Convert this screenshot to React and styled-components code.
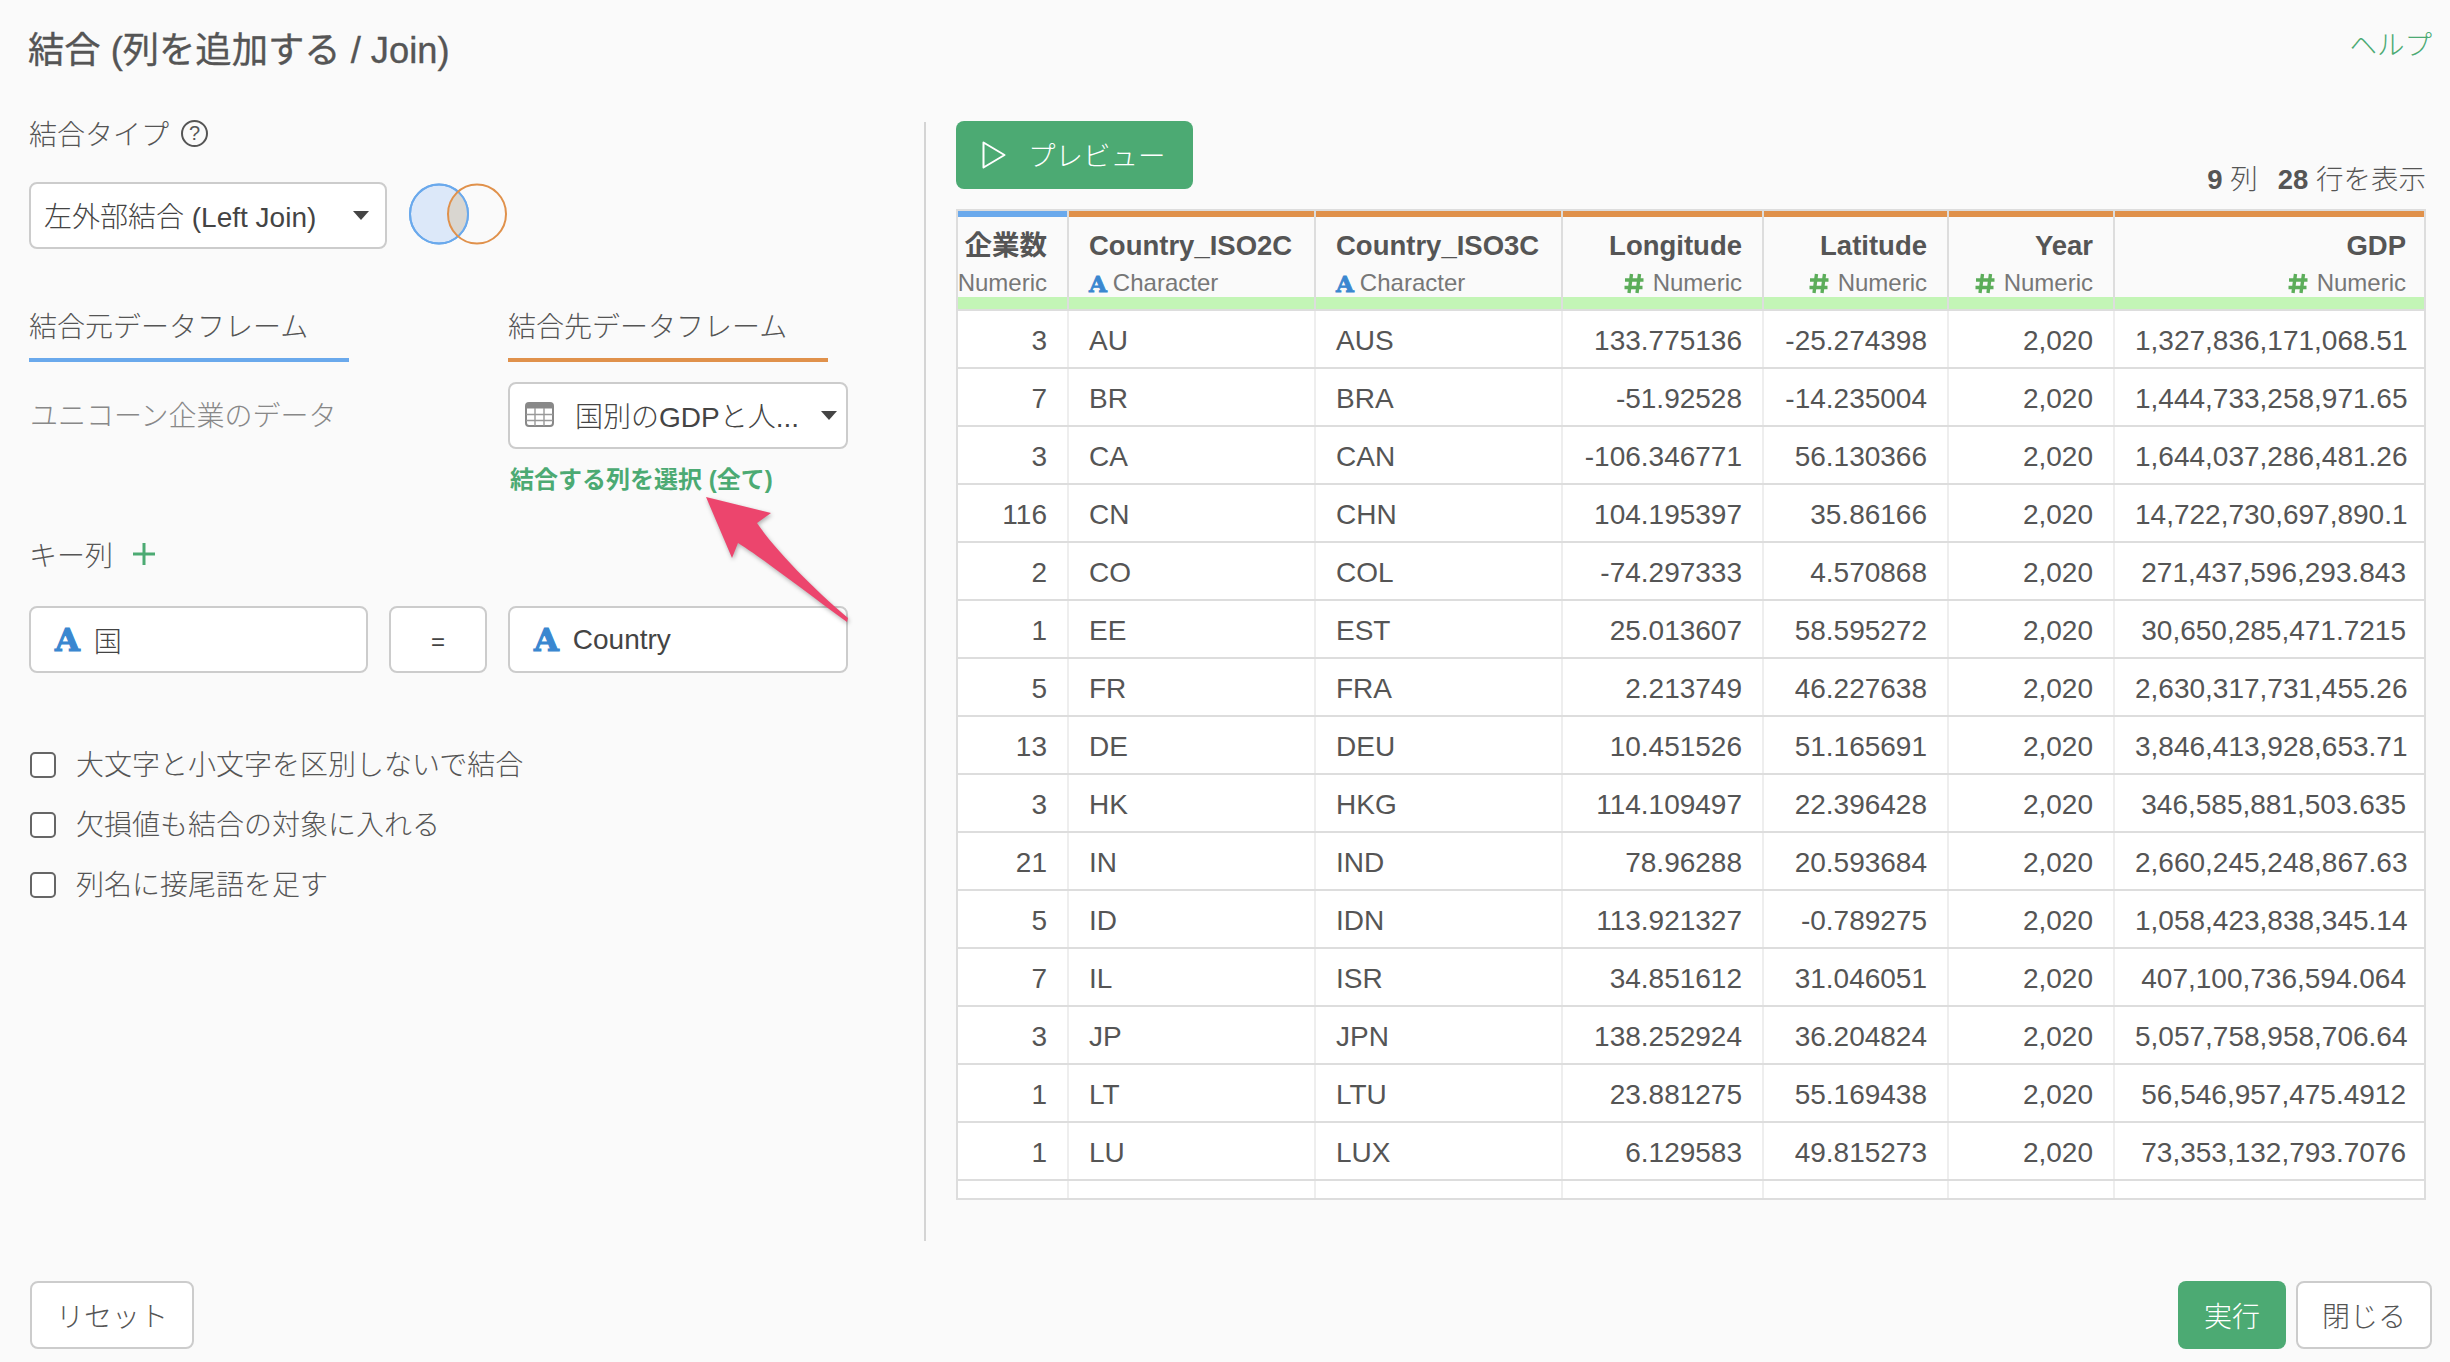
import React from 'react';
import styled, { createGlobalStyle } from 'styled-components';

const GlobalStyle = createGlobalStyle`
  html, body {
    margin: 0;
    padding: 0;
    background: #fafafa;
  }
  body {
    font-family: "Liberation Sans", "Noto Sans CJK JP", sans-serif;
    font-size: 28px;
    color: #555;
  }
  * {
    box-sizing: border-box;
  }
`;

const GREEN = '#4caa73';
const BLUE = '#6aa9ec';
const ORANGE = '#e0914b';

const Page = styled.div`
  position: relative;
  width: 2450px;
  height: 1362px;
  overflow: hidden;
  background: #fafafa;
`;

const Header = styled.header`
  display: flex;
  justify-content: space-between;
  align-items: flex-start;
  height: 122px;
  padding: 30px 18px 0 28px;
`;

const Title = styled.h1`
  margin: 0;
  font-size: 36.3px;
  font-weight: 400;
  line-height: 42px;
  color: #555;
  -webkit-text-stroke: 0.35px #555;
`;

const HelpLink = styled.a`
  margin-top: 1px;
  font-size: 27.5px;
  font-weight: 300;
  line-height: 30px;
  color: ${GREEN};
`;

const Body = styled.div`
  display: flex;
  height: 1119px;
`;

const LeftPane = styled.section`
  width: 926px;
  padding-left: 29px;
  border-right: 2px solid #d4d4d4;
`;

const Label = styled.div`
  display: flex;
  align-items: center;
  gap: ${(p) => p.$gap || 12}px;
  height: 22px;
  font-size: 28px;
  font-weight: 300;
  color: #555;
`;

const HelpMark = styled.span`
  display: flex;
  align-items: center;
  justify-content: center;
  width: 27px;
  height: 27px;
  border: 2px solid #555;
  border-radius: 50%;
  font-size: 20px;
  line-height: 1;
`;

const JoinRow = styled.div`
  display: flex;
  gap: 22px;
  margin-top: 38px;
`;

const Select = styled.div`
  display: flex;
  align-items: center;
  justify-content: space-between;
  width: ${(p) => p.$width}px;
  height: 67px;
  padding: 0 ${(p) => p.$right}px 0 ${(p) => p.$left}px;
  background: #fff;
  border: 2px solid #ccc;
  border-radius: 8px;
  font-size: 28px;
  font-weight: 300;
  color: #444;
`;

const SelectText = styled.span`
  display: flex;
  align-items: center;
  gap: 21px;
  margin-top: -2px;
  white-space: nowrap;
`;

const Caret = styled.span`
  width: 0;
  height: 0;
  border-left: 8px solid transparent;
  border-right: 8px solid transparent;
  border-top: 9px solid #444;
`;

const Venn = styled.svg`
  display: block;
  width: 98px;
  height: 62px;
  margin-top: 1px;
`;

const FrameGrid = styled.div`
  display: grid;
  grid-template-columns: 479px 340px;
  margin-top: 62px;
`;

const Tab = styled.div`
  width: 320px;
  height: 51px;
  padding-top: 3px;
  line-height: 28px;
  font-size: 28px;
  font-weight: 300;
  color: #555;
  border-bottom: 4px solid ${(p) => p.$color};
`;

const SourceName = styled.div`
  display: flex;
  align-items: center;
  height: 63px;
  margin-top: 20px;
  padding-left: 1px;
  font-size: 28px;
  font-weight: 300;
  color: #888;
`;

const TargetCol = styled.div`
  margin-top: 20px;
`;

const PickColumns = styled.a`
  display: block;
  margin-top: 16px;
  padding-left: 2px;
  line-height: 30px;
  font-size: 24px;
  font-weight: 700;
  color: ${GREEN};
  white-space: nowrap;
`;

const KeyLabel = styled(Label)`
  height: 30px;
  margin-top: 44px;
`;

const Plus = styled.svg`
  display: block;
  width: 22px;
  height: 22px;
`;

const KeyRow = styled.div`
  display: grid;
  grid-template-columns: 339px 98px 340px;
  gap: 21px;
  margin-top: 37px;
`;

const KeyBox = styled.div`
  display: flex;
  align-items: center;
  gap: 14px;
  height: 67px;
  padding-left: 24px;
  background: #fff;
  border: 2px solid #ccc;
  border-radius: 8px;
  font-size: 28px;
  font-weight: 300;
  color: #444;
`;

const EqualBox = styled(KeyBox)`
  justify-content: center;
  padding: 5px 0 0;
  font-size: 24px;
`;

const CharMark = styled.span`
  font-family: "DejaVu Serif", serif;
  font-weight: 700;
  font-size: ${(p) => p.$size}px;
  line-height: 1;
  color: #3a87d0;
  -webkit-text-stroke: ${(p) => p.$thick}px #3a87d0;
`;

const Options = styled.div`
  margin-top: 62px;
`;

const Option = styled.label`
  display: flex;
  align-items: center;
  gap: 20px;
  height: 60px;
  padding-left: 1px;
  font-size: 28px;
  font-weight: 300;
  color: #555;
`;

const OptionText = styled.span`
  margin-top: -5px;
`;

const Box = styled.span`
  width: 26px;
  height: 26px;
  background: #fff;
  border: 2px solid #666;
  border-radius: 5px;
`;

const RightPane = styled.section`
  width: 1500px;
  padding-left: 30px;
`;

const Toolbar = styled.div`
  display: flex;
  justify-content: space-between;
  width: 1470px;
  height: 87px;
`;

const PreviewButton = styled.button`
  display: flex;
  align-items: center;
  gap: 22px;
  width: 237px;
  height: 68px;
  margin-top: -1px;
  padding: 0 0 0 26px;
  background: ${GREEN};
  border: 0;
  border-radius: 8px;
  font-family: inherit;
  font-size: 27.5px;
  font-weight: 300;
  color: #fff;
`;

const PreviewText = styled.span`
  margin-top: -3px;
`;

const Stats = styled.div`
  align-self: flex-end;
  display: flex;
  gap: 20px;
  margin-bottom: 14px;
  line-height: 30px;
  font-size: 27.5px;
  font-weight: 300;
  color: #555;

  b {
    font-weight: 700;
  }
`;

const Table = styled.div`
  width: 1470px;
  background: #fff;
  border: 2px solid #ddd;
`;

const COLUMNS = '111px 247px 247px 201px 185px 166px 1fr';

const HeadRow = styled.div`
  display: grid;
  grid-template-columns: ${COLUMNS};
  background: #fafafa;
  border-bottom: 2px solid #ddd;
`;

const HeadCell = styled.div`
  display: flex;
  flex-direction: column;
  text-align: ${(p) => (p.$left ? 'left' : 'right')};
  border-right: 2px solid #ddd;

  &:last-child {
    border-right: 0;
  }
`;

const TypeBar = styled.div`
  height: 6px;
  background: ${(p) => p.$color};
`;

const HeadText = styled.div`
  height: 80px;
  padding: 14px ${(p) => (p.$last ? 18 : 20)}px 0 ${(p) => (p.$plain ? 0 : 20)}px;
`;

const ColName = styled.div`
  line-height: 30px;
  font-size: 27.5px;
  font-weight: 700;
  color: #555;
  white-space: nowrap;
`;

const ColType = styled.div`
  display: flex;
  align-items: center;
  justify-content: ${(p) => (p.$left ? 'flex-start' : 'flex-end')};
  gap: ${(p) => p.$gap}px;
  height: 26px;
  margin-top: 9px;
  font-size: 24px;
  color: #777;
  white-space: nowrap;
`;

const Hash = styled.svg`
  display: block;
  width: 20px;
  height: 21px;
`;

const Stripe = styled.div`
  height: 12px;
  background: #c3f5b6;
`;

const Row = styled.div`
  display: grid;
  grid-template-columns: ${COLUMNS};
  height: ${(p) => (p.$stub ? 17 : 58)}px;
  border-bottom: ${(p) => (p.$stub ? 0 : '2px solid #ddd')};
`;

const Cell = styled.div`
  display: flex;
  align-items: center;
  justify-content: ${(p) => (p.$left ? 'flex-start' : 'flex-end')};
  padding: 3px 20px 0;
  font-size: 28px;
  color: #555;
  white-space: nowrap;
  border-right: 2px solid #eee;

  &:last-child {
    padding-right: 18px;
    border-right: 0;
  }
`;

const Footer = styled.footer`
  display: flex;
  justify-content: space-between;
  height: 68px;
  margin-top: 40px;
  padding: 0 18px 0 30px;
`;

const FooterRight = styled.div`
  display: flex;
  gap: 10px;
`;

const Button = styled.button`
  width: ${(p) => p.$width}px;
  height: 68px;
  padding: 0;
  background: ${(p) => (p.$primary ? GREEN : '#fff')};
  border: ${(p) => (p.$primary ? '0' : '2px solid #ccc')};
  border-radius: 8px;
  font-family: inherit;
  font-size: 28px;
  font-weight: 300;
  color: ${(p) => (p.$primary ? '#fff' : '#555')};
`;

const Arrow = styled.svg`
  position: absolute;
  left: 700px;
  top: 490px;
  width: 160px;
  height: 140px;
  filter: drop-shadow(1px 2px 2px rgba(0, 0, 0, 0.3));
`;

const columns = [
  { name: '企業数', type: 'Numeric', bar: BLUE, plain: true },
  { name: 'Country_ISO2C', type: 'Character', bar: ORANGE, left: true },
  { name: 'Country_ISO3C', type: 'Character', bar: ORANGE, left: true },
  { name: 'Longitude', type: 'Numeric', bar: ORANGE },
  { name: 'Latitude', type: 'Numeric', bar: ORANGE },
  { name: 'Year', type: 'Numeric', bar: ORANGE },
  { name: 'GDP', type: 'Numeric', bar: ORANGE },
];

const rows = [
  ['3', 'AU', 'AUS', '133.775136', '-25.274398', '2,020', '1,327,836,171,068.51'],
  ['7', 'BR', 'BRA', '-51.92528', '-14.235004', '2,020', '1,444,733,258,971.65'],
  ['3', 'CA', 'CAN', '-106.346771', '56.130366', '2,020', '1,644,037,286,481.26'],
  ['116', 'CN', 'CHN', '104.195397', '35.86166', '2,020', '14,722,730,697,890.1'],
  ['2', 'CO', 'COL', '-74.297333', '4.570868', '2,020', '271,437,596,293.843'],
  ['1', 'EE', 'EST', '25.013607', '58.595272', '2,020', '30,650,285,471.7215'],
  ['5', 'FR', 'FRA', '2.213749', '46.227638', '2,020', '2,630,317,731,455.26'],
  ['13', 'DE', 'DEU', '10.451526', '51.165691', '2,020', '3,846,413,928,653.71'],
  ['3', 'HK', 'HKG', '114.109497', '22.396428', '2,020', '346,585,881,503.635'],
  ['21', 'IN', 'IND', '78.96288', '20.593684', '2,020', '2,660,245,248,867.63'],
  ['5', 'ID', 'IDN', '113.921327', '-0.789275', '2,020', '1,058,423,838,345.14'],
  ['7', 'IL', 'ISR', '34.851612', '31.046051', '2,020', '407,100,736,594.064'],
  ['3', 'JP', 'JPN', '138.252924', '36.204824', '2,020', '5,057,758,958,706.64'],
  ['1', 'LT', 'LTU', '23.881275', '55.169438', '2,020', '56,546,957,475.4912'],
  ['1', 'LU', 'LUX', '6.129583', '49.815273', '2,020', '73,353,132,793.7076'],
];

const HashIcon = () => (
  <Hash viewBox="0 0 20 21">
    <path d="M7.5 1 L5 20 M15.5 1 L13 20 M1 7 H19.5 M0.5 14.5 H18.5" stroke="#5cad5a" strokeWidth="3.4" fill="none" />
  </Hash>
);

const TableIcon = () => (
  <svg width="29" height="25" viewBox="0 0 29 25" style={{ display: 'block' }}>
    <rect x="1" y="1" width="27" height="23" rx="3" fill="none" stroke="#888" strokeWidth="2" />
    <path d="M1 2 H28 V6.5 H1 Z" fill="#888" />
    <path d="M1 12.5 H28 M1 18.5 H28 M10 6 V24 M19 6 V24" stroke="#999" strokeWidth="1.4" />
  </svg>
);

const App = () => {
  return (
    <Page>
      <GlobalStyle />
      <Header>
        <Title>結合 (列を追加する / Join)</Title>
        <HelpLink>ヘルプ</HelpLink>
      </Header>

      <Body>
        <LeftPane>
          <Label>
            結合タイプ
            <HelpMark>?</HelpMark>
          </Label>

          <JoinRow>
            <Select $width={358} $left={13} $right={16}>
              <SelectText>左外部結合 (Left Join)</SelectText>
              <Caret />
            </Select>
            <Venn viewBox="0 0 98 62">
              <ellipse cx="30" cy="31" rx="29" ry="29.5" fill="#dce8f9" stroke={BLUE} strokeWidth="2" />
              <path d="M49 8.5 C 61 20 61 42 49 53.5 C 37 42 37 20 49 8.5 Z" fill="#d9d6d0" />
              <ellipse cx="30" cy="31" rx="29" ry="29.5" fill="none" stroke={BLUE} strokeWidth="2" />
              <ellipse cx="68" cy="31" rx="29" ry="29.5" fill="none" stroke={ORANGE} strokeWidth="2" />
            </Venn>
          </JoinRow>

          <FrameGrid>
            <Tab $color={BLUE}>結合元データフレーム</Tab>
            <Tab $color={ORANGE}>結合先データフレーム</Tab>
            <SourceName>ユニコーン企業のデータ</SourceName>
            <TargetCol>
              <Select $width={340} $left={15} $right={9}>
                <SelectText>
                  <TableIcon />
                  国別のGDPと人...
                </SelectText>
                <Caret />
              </Select>
              <PickColumns>結合する列を選択 (全て)</PickColumns>
            </TargetCol>
          </FrameGrid>

          <KeyLabel $gap={20}>
            キー列
            <Plus viewBox="0 0 22 22">
              <path d="M11 0 V22 M0 11 H22" stroke={GREEN} strokeWidth="3" />
            </Plus>
          </KeyLabel>

          <KeyRow>
            <KeyBox>
              <CharMark $size={32} $thick={1.2}>A</CharMark>
              国
            </KeyBox>
            <EqualBox>=</EqualBox>
            <KeyBox>
              <CharMark $size={32} $thick={1.2}>A</CharMark>
              Country
            </KeyBox>
          </KeyRow>

          <Options>
            <Option><Box /><OptionText>大文字と小文字を区別しないで結合</OptionText></Option>
            <Option><Box /><OptionText>欠損値も結合の対象に入れる</OptionText></Option>
            <Option><Box /><OptionText>列名に接尾語を足す</OptionText></Option>
          </Options>
        </LeftPane>

        <RightPane>
          <Toolbar>
            <PreviewButton>
              <svg width="24" height="28" viewBox="0 0 24 28" style={{ display: 'block' }}>
                <path d="M1.5 1.5 L22.5 14 L1.5 26.5 Z" fill="none" stroke="#fff" strokeWidth="2" strokeLinejoin="round" />
              </svg>
              <PreviewText>プレビュー</PreviewText>
            </PreviewButton>
            <Stats>
              <span><b>9</b> 列</span>
              <span><b>28</b> 行を表示</span>
            </Stats>
          </Toolbar>

          <Table>
            <HeadRow>
              {columns.map((col, i) => (
                <HeadCell key={col.name} $left={col.left}>
                  <TypeBar $color={col.bar} />
                  <HeadText $last={i === 6} $plain={col.plain}>
                    <ColName>{col.name}</ColName>
                    <ColType $left={col.left} $gap={col.left ? 6 : 9}>
                      {col.left && <CharMark $size={23} $thick={0.9}>A</CharMark>}
                      {!col.left && !col.plain && <HashIcon />}
                      {col.type}
                    </ColType>
                  </HeadText>
                  <Stripe />
                </HeadCell>
              ))}
            </HeadRow>

            {rows.map((row) => (
              <Row key={row[1]}>
                {row.map((value, i) => (
                  <Cell key={i} $left={i === 1 || i === 2}>{value}</Cell>
                ))}
              </Row>
            ))}
            <Row $stub>
              {columns.map((col) => (
                <Cell key={col.name} />
              ))}
            </Row>
          </Table>
        </RightPane>
      </Body>

      <Footer>
        <Button $width={164}>リセット</Button>
        <FooterRight>
          <Button $primary $width={108}>実行</Button>
          <Button $width={136}>閉じる</Button>
        </FooterRight>
      </Footer>

      <Arrow viewBox="700 490 160 140">
        <path d="M706 497 L771 513 L757 523 C 775 550 815 590 848 618 L847 622 C 810 595 765 560 738 543 L732 558 Z" fill="#ec456d" />
      </Arrow>
    </Page>
  );
};

export default App;
